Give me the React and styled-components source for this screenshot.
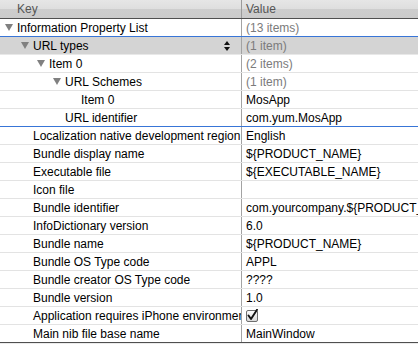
import React from "react";
import styled, { createGlobalStyle } from "styled-components";

const GlobalStyle = createGlobalStyle`
  html, body {
    margin: 0;
    padding: 0;
    background: #ebebeb;
  }
  body {
    font-family: "Liberation Sans", Arial, sans-serif;
    font-size: 12px;
    color: #000;
  }
`

const Wrapper = styled.div`
  width: 418px;
  height: 344px;
  overflow: hidden;
  background: #ebebeb;
`

const Header = styled.div`
  display: flex;
  height: 18px;
  border-bottom: 1px solid #4f4f4f;
  background: linear-gradient(#e6e6e6 0%, #dedede 50%, #cdcdcd 50%, #cbcbcb 100%);
  color: #555;
`

const HeaderCell = styled.div`
  display: flex;
  align-items: center;
  width: ${p => (p.$key ? "242px" : "auto")};
  flex: ${p => (p.$key ? "none" : "1")};
  box-sizing: border-box;
  padding-left: ${p => (p.$key ? "17px" : "4px")};
  border-right: ${p => (p.$key ? "1px solid #9b9b9b" : "none")};
`

const Row = styled.div`
  display: flex;
  height: 17px;
  background: ${p => (p.$highlight ? "#d4d4d4" : "#fff")};
  border-bottom: 1px solid ${p => p.$line || "#e3e3e3"};
`

const KeyCell = styled.div`
  display: flex;
  align-items: center;
  width: 242px;
  flex: none;
  box-sizing: border-box;
  padding-left: ${p => 5 + p.$level * 16}px;
  border-right: 1px solid #a3a3a3;
  white-space: nowrap;
  overflow: hidden;
`

const Disclosure = styled.span`
  width: 0;
  height: 0;
  flex: none;
  margin-right: 4px;
  border-left: 4px solid transparent;
  border-right: 4px solid transparent;
  border-top: 7px solid ${p => (p.$open ? "#808080" : "transparent")};
`

const KeyText = styled.span`
  flex: none;
`

const Stepper = styled.span`
  display: flex;
  flex-direction: column;
  gap: 2px;
  margin-left: auto;
  margin-right: 11px;
  flex: none;
`

const Arrow = styled.span`
  width: 0;
  height: 0;
  border-left: 3px solid transparent;
  border-right: 3px solid transparent;
  ${p => (p.$up ? "border-bottom: 4px solid #111;" : "border-top: 4px solid #111;")}
`

const ValueCell = styled.div`
  display: flex;
  align-items: center;
  flex: 1;
  padding-left: 4px;
  white-space: nowrap;
  overflow: hidden;
  color: ${p => (p.$muted ? "#7b7b7b" : "#000")};
`

const Check = () => (
  <svg width="13" height="13" viewBox="0 0 13 13">
    <defs>
      <linearGradient id="cb" x1="0" y1="0" x2="0" y2="1">
        <stop offset="0" stopColor="#fdfdfd" />
        <stop offset="1" stopColor="#d8d8d8" />
      </linearGradient>
    </defs>
    <rect x="0.5" y="1.5" width="11" height="11" rx="1.5" fill="url(#cb)" stroke="#6e6e6e" />
    <path d="M2.5 6.5 L5 10 L11 0.8" fill="none" stroke="#111" strokeWidth="1.9" strokeLinecap="round" strokeLinejoin="round" />
  </svg>
)

const rows = [
  { key: "Information Property List", level: 0, open: true, value: "(13 items)", muted: true, line: "#3875d7" },
  { key: "URL types", level: 1, open: true, value: "(1 item)", muted: true, highlight: true, stepper: true, line: "#e8e8e8" },
  { key: "Item 0", level: 2, open: true, value: "(2 items)", muted: true },
  { key: "URL Schemes", level: 3, open: true, value: "(1 item)", muted: true },
  { key: "Item 0", level: 4, value: "MosApp" },
  { key: "URL identifier", level: 3, value: "com.yum.MosApp", line: "#3875d7" },
  { key: "Localization native development region", level: 1, value: "English" },
  { key: "Bundle display name", level: 1, value: "${PRODUCT_NAME}" },
  { key: "Executable file", level: 1, value: "${EXECUTABLE_NAME}" },
  { key: "Icon file", level: 1, value: "" },
  { key: "Bundle identifier", level: 1, value: "com.yourcompany.${PRODUCT_NAME:rfc1034identifier}" },
  { key: "InfoDictionary version", level: 1, value: "6.0" },
  { key: "Bundle name", level: 1, value: "${PRODUCT_NAME}" },
  { key: "Bundle OS Type code", level: 1, value: "APPL" },
  { key: "Bundle creator OS Type code", level: 1, value: "????" },
  { key: "Bundle version", level: 1, value: "1.0" },
  { key: "Application requires iPhone environment", level: 1, check: true },
  { key: "Main nib file base name", level: 1, value: "MainWindow", line: "#4f4f4f" },
];

class App extends React.Component {
  render() {
    return (
      <Wrapper>
        <GlobalStyle />
        <Header>
          <HeaderCell $key>Key</HeaderCell>
          <HeaderCell>Value</HeaderCell>
        </Header>
        {rows.map((row, i) => (
          <Row key={i} $highlight={row.highlight} $line={row.line}>
            <KeyCell $level={row.level}>
              <Disclosure $open={row.open} />
              <KeyText>{row.key}</KeyText>
              {row.stepper && (
                <Stepper>
                  <Arrow $up />
                  <Arrow />
                </Stepper>
              )}
            </KeyCell>
            <ValueCell $muted={row.muted}>
              {row.check ? <Check /> : row.value}
            </ValueCell>
          </Row>
        ))}
      </Wrapper>
    );
  }
}

export default App;
